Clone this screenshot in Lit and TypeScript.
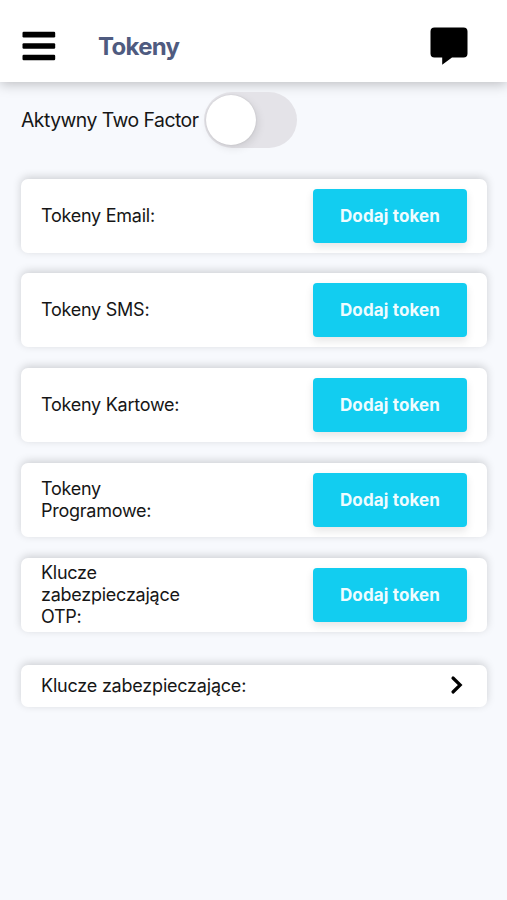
import { LitElement, html, css } from "lit";
import { customElement, property } from "lit/decorators.js";

@customElement("token-row")
class TokenRow extends LitElement {
  @property() label = "";

  static styles = css`
    :host {
      display: flex;
      align-items: center;
      justify-content: space-between;
      box-sizing: border-box;
      height: 74px;
      padding: 0 20px;
      background: #fff;
      border-radius: 7px;
      box-shadow: 0 -2px 8px rgba(0, 0, 0, 0.17);
    }
    .label {
      width: 150px;
      font-size: 18px;
      letter-spacing: -0.25px;
      line-height: 22px;
    }
    button {
      width: 154px;
      height: 54px;
      padding: 0;
      border: 0;
      border-radius: 4px;
      background: #12cdf0;
      color: #effcff;
      font: 700 17px "Inter", sans-serif;
      letter-spacing: 0.14px;
      box-shadow: 0 4px 8px rgba(0, 0, 0, 0.1);
    }
  `;

  render() {
    return html`<span class="label">${this.label}</span><button>Dodaj token</button>`;
  }
}

@customElement("app-root")
class AppRoot extends LitElement {
  static styles = css`
    :host {
      display: block;
      height: 900px;
      overflow: hidden;
      background: #f7f9fd;
      color: #161616;
      font-family: "Inter", sans-serif;
    }
    header {
      display: flex;
      align-items: center;
      box-sizing: border-box;
      height: 81.5px;
      padding: 10px 39px 0 22px;
      background: #fff;
      box-shadow: 0 2px 12px rgba(0, 0, 0, 0.25);
    }
    svg {
      display: block;
      flex: none;
    }
    h1 {
      flex: 1;
      margin: 2px 0 0 42px;
      color: #4f5b80;
      font-size: 24px;
      line-height: 30px;
      letter-spacing: -0.7px;
      font-weight: 700;
    }
    .factor {
      display: flex;
      align-items: center;
      height: 57px;
      padding: 10px 0 0 21px;
      gap: 5px;
    }
    .caption {
      font-size: 19.4px;
      letter-spacing: -0.53px;
      white-space: nowrap;
      width: 178px;
    }
    .switch {
      box-sizing: border-box;
      width: 93px;
      height: 56px;
      padding: 3px 2px;
      border-radius: 28px;
      background: #e4e3e8;
    }
    .knob {
      width: 50px;
      height: 50px;
      border-radius: 50%;
      background: #fff;
      box-shadow: 0 0 2px rgba(0, 0, 0, 0.12), 2px 3px 9px rgba(0, 0, 0, 0.1);
    }
    .list {
      display: flex;
      flex-direction: column;
      gap: 20.75px;
      padding: 30px 20px 0 21px;
    }
    .keys {
      display: flex;
      align-items: center;
      justify-content: space-between;
      box-sizing: border-box;
      height: 42px;
      margin-top: 12.7px;
      padding: 0 23px 0 20px;
      background: #fff;
      border-radius: 7px;
      box-shadow: 0 -2px 8px rgba(0, 0, 0, 0.17);
      font-size: 18px;
      letter-spacing: -0.21px;
      line-height: 22px;
    }
    .keys svg {
      margin-bottom: 2px;
    }
  `;

  private labels = [
    "Tokeny Email:",
    "Tokeny SMS:",
    "Tokeny Kartowe:",
    "Tokeny Programowe:",
    "Klucze zabezpieczające OTP:",
  ];

  render() {
    return html`
      <header>
        <svg width="34" height="30" viewBox="0 0 34 30">
          <rect x="0.5" y="0.8" width="32.7" height="5.6" rx="1.2" />
          <rect x="0.5" y="12.2" width="32.7" height="5.6" rx="1.2" />
          <rect x="0.5" y="23.7" width="32.7" height="5.6" rx="1.2" />
        </svg>
        <h1>Tokeny</h1>
        <svg width="38" height="38" viewBox="0 0 38 38">
          <path d="M4.5 0.5H33.5Q37.5 0.5 37.5 4.5V26.5Q37.5 30.5 33.5 30.5H22L12.2 37.7V30.5H4.5Q0.5 30.5 0.5 26.5V4.5Q0.5 0.5 4.5 0.5Z" />
        </svg>
      </header>
      <div class="factor">
        <span class="caption">Aktywny Two Factor</span>
        <div class="switch"><div class="knob"></div></div>
      </div>
      <div class="list">
        ${this.labels.map((l) => html`<token-row .label=${l}></token-row>`)}
        <div class="keys">
          <span>Klucze zabezpieczające:</span>
          <svg width="14" height="20" viewBox="0 0 14 20">
            <path d="M3 3L10.2 10L3 17" fill="none" stroke="#000" stroke-width="3.2" stroke-linecap="round" stroke-linejoin="miter" />
          </svg>
        </div>
      </div>
    `;
  }
}
